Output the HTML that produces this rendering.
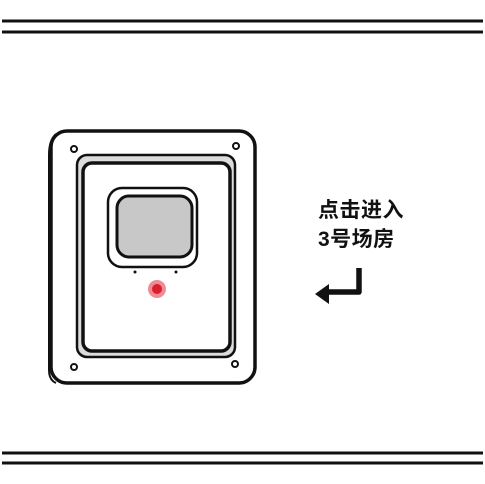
<!DOCTYPE html>
<html><head><meta charset="utf-8"><style>
body{margin:0;width:485px;height:484px;background:#fff;overflow:hidden;position:relative;font-family:"Liberation Sans","Noto Sans CJK SC",sans-serif}
.t{position:absolute;left:318px;font-size:21px;font-weight:bold;color:#111;letter-spacing:0.5px;line-height:24px}
</style></head><body>
<svg width="485" height="484" style="position:absolute;left:0;top:0">
<g stroke="#111" stroke-width="3">
<line x1="2" y1="21" x2="483" y2="21"/><line x1="2" y1="32" x2="483" y2="32"/>
<line x1="2" y1="453" x2="483" y2="453"/><line x1="2" y1="463" x2="483" y2="463"/>
</g>
<rect x="51" y="131" width="204" height="252" rx="16" fill="#fff" stroke="#111" stroke-width="3.5"/>
<path d="M56 134 Q49 140 49 155 L49 370 Q49 380 56 383" fill="none" stroke="#111" stroke-width="2"/>
<rect x="77" y="155" width="158" height="202" rx="10" fill="#dcdcdc" stroke="#111" stroke-width="2.5"/>
<rect x="83" y="163" width="147" height="188" rx="9" fill="#fff" stroke="#111" stroke-width="3.5"/>
<rect x="108" y="188" width="89" height="79" rx="14" fill="#fff" stroke="#111" stroke-width="2.5"/>
<rect x="117" y="196" width="75" height="61" rx="12" fill="#c8c8c8" stroke="#111" stroke-width="3"/>
<circle cx="135" cy="272" r="1.5" fill="#111"/><circle cx="176" cy="272" r="1.5" fill="#111"/>
<circle cx="157" cy="289" r="9" fill="#f08a95"/><circle cx="157" cy="289" r="5" fill="#d8202e"/>
<g fill="#fff" stroke="#111" stroke-width="2">
<circle cx="74" cy="149" r="3"/><circle cx="236" cy="146" r="3"/><circle cx="74" cy="367" r="3"/><circle cx="235" cy="364" r="3"/>
</g>
<path d="M359 268 L359 292 L326 292" fill="none" stroke="#111" stroke-width="5.5" stroke-linejoin="round"/>
<path d="M315 294 L329 284 L329 304 Z" fill="#111"/>
</svg>
<div class="t" style="top:199px">点击进入</div>
<div class="t" style="top:228px">3号场房</div>
</body></html>
